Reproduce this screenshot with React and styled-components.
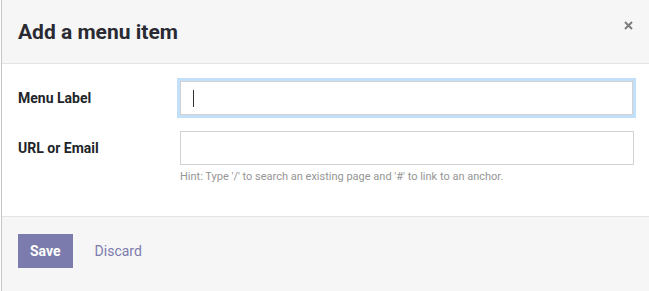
import React from 'react';
import styled, { createGlobalStyle } from 'styled-components';

const GlobalStyle = createGlobalStyle`
  html, body {
    margin: 0;
    padding: 0;
    background: #ffffff;
  }
  body {
    font-family: Roboto, "Liberation Sans", sans-serif;
    color: #212529;
  }
`;

const Page = styled.div`
  padding-left: 1px;
  height: 291px;
  box-sizing: border-box;
`;

const Modal = styled.div`
  border-left: 1px solid #c4c4c4;
  height: 100%;
  display: flex;
  flex-direction: column;
  background: #fff;
`;

const Header = styled.header`
  height: 63px;
  display: flex;
  align-items: center;
  justify-content: space-between;
  padding: 0 14px 0 16px;
  background: #f6f6f6;
  border-bottom: 1px solid #e4e4e4;
`;

const Title = styled.h4`
  margin: 0;
  font-size: 21px;
  font-weight: 700;
  color: #2a2a33;
`;

const Close = styled.button`
  border: 0;
  background: none;
  padding: 0;
  margin-top: -12px;
  width: 14px;
  height: 14px;
  display: flex;
  align-items: center;
  justify-content: center;
  cursor: pointer;
`;

const Body = styled.div`
  padding: 17px 15px 0 16px;
  height: 152px;
  box-sizing: border-box;
  display: grid;
  grid-template-columns: 162px 1fr;
  grid-auto-rows: min-content;
  row-gap: 16px;
  align-items: start;
`;

const Label = styled.label`
  font-size: 14px;
  font-weight: 700;
  color: #212529;
  height: 34px;
  display: flex;
  align-items: center;
`;

const Field = styled.div`
  display: flex;
  flex-direction: column;
`;

const Input = styled.div`
  border: 1px solid #d2d2d2;
  box-sizing: border-box;
  height: 34px;
  margin-right: ${p => (p.focused ? '1px' : '0')};
  box-shadow: ${p => (p.focused ? '0 0 0 3px #c2e0fa' : 'none')};
  display: flex;
  align-items: center;
  padding-left: 12px;
`;

const Caret = styled.span`
  width: 1px;
  height: 17px;
  background: #333;
`;

const Hint = styled.small`
  margin-top: 5px;
  font-size: 11px;
  color: #959595;
`;

const Footer = styled.footer`
  flex: 1;
  background: #f6f6f6;
  border-top: 1px solid #e4e4e4;
  display: flex;
  align-items: center;
  gap: 22px;
  padding: 0 16px 6px;
`;

const Button = styled.button`
  font-family: inherit;
  font-size: 14px;
  height: 34px;
  border: 0;
  padding: ${p => (p.primary ? '0 12px' : '0')};
  background: ${p => (p.primary ? '#7c7bad' : 'transparent')};
  color: ${p => (p.primary ? '#ffffff' : '#7c7bad')};
  font-weight: ${p => (p.primary ? 700 : 400)};
  cursor: pointer;
`;

export default function App() {
  return (
    <>
      <GlobalStyle />
      <Page>
        <Modal>
          <Header>
            <Title>Add a menu item</Title>
            <Close aria-label="Close">
              <svg width="9" height="9" viewBox="0 0 9 9">
                <path d="M1 1L8 8M8 1L1 8" stroke="#7d7d7d" strokeWidth="2" />
              </svg>
            </Close>
          </Header>
          <Body>
            <Label>Menu Label</Label>
            <Field>
              <Input focused>
                <Caret />
              </Input>
            </Field>
            <Label>URL or Email</Label>
            <Field>
              <Input />
              <Hint>Hint: Type '/' to search an existing page and '#' to link to an anchor.</Hint>
            </Field>
          </Body>
          <Footer>
            <Button primary>Save</Button>
            <Button>Discard</Button>
          </Footer>
        </Modal>
      </Page>
    </>
  );
}
